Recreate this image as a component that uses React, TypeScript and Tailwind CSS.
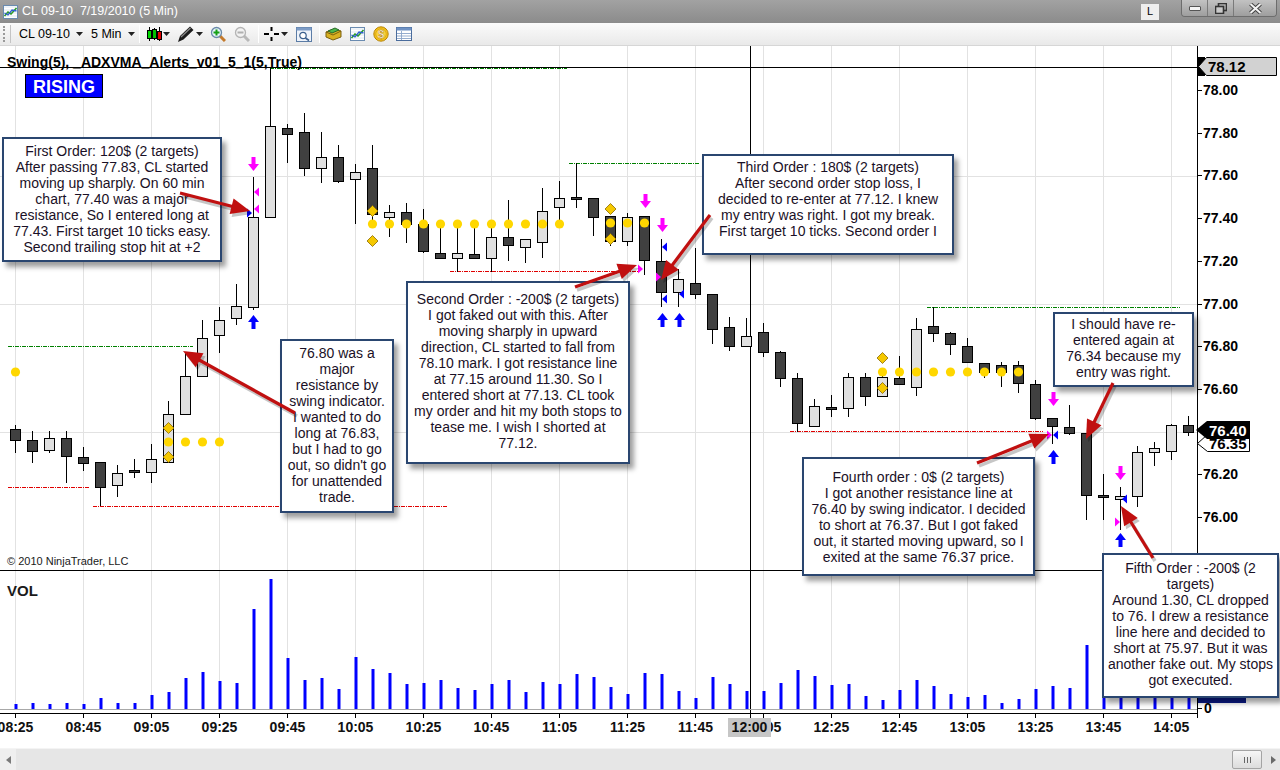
import React from "react";

// price pane: y = 90 + (78 - price) * 213.5, bars every 17px starting at x=15
const bx = (i: number) => 15 + i * 17;
const py = (p: number) => 90 + (78 - p) * 213.5;

// [bodyTop, bodyBottom, wickTop, wickBottom, down]  (page pixels)
const candles: [number, number, number, number, number][] = [
  [429, 440, 425, 453, 1], [440, 451, 431, 463, 1], [438, 450, 431, 453, 0], [438, 456, 431, 483, 1],
  [457, 463, 447, 471, 1], [462, 487, 462, 506, 1], [473, 485, 465, 497, 0], [470, 472, 459, 478, 1],
  [459, 472, 444, 483, 0], [414, 462, 401, 463, 0], [376, 414, 353, 414, 0], [338, 376, 320, 376, 0],
  [320, 335, 307, 353, 0], [306, 318, 284, 325, 0], [217, 307, 177, 310, 0], [126, 217, 68, 217, 0],
  [128, 134, 124, 163, 1], [132, 168, 113, 176, 1], [157, 168, 132, 183, 0], [157, 181, 145, 183, 1],
  [172, 179, 164, 224, 0], [168, 214, 145, 224, 1], [212, 217, 205, 237, 0], [212, 224, 203, 243, 1],
  [224, 251, 209, 253, 1], [253, 258, 225, 258, 1], [253, 258, 225, 272, 0], [254, 258, 225, 258, 1],
  [237, 258, 225, 272, 0], [237, 245, 200, 261, 1], [239, 247, 239, 263, 0], [211, 242, 188, 258, 0],
  [198, 207, 181, 225, 0], [197, 199, 163, 208, 1], [198, 217, 198, 236, 1], [216, 241, 216, 246, 1],
  [217, 241, 213, 246, 0], [216, 260, 216, 275, 1], [261, 292, 239, 307, 1], [279, 292, 269, 307, 0],
  [283, 294, 248, 299, 1], [294, 329, 294, 344, 1], [327, 346, 317, 351, 1], [336, 346, 318, 346, 0],
  [332, 352, 323, 357, 1], [352, 378, 351, 387, 1], [378, 423, 373, 432, 1], [406, 426, 399, 427, 0],
  [407, 409, 395, 417, 1], [377, 408, 373, 417, 0], [377, 396, 373, 406, 1], [377, 396, 373, 396, 0],
  [378, 384, 356, 384, 1], [329, 387, 318, 396, 0], [326, 333, 307, 342, 1], [333, 344, 332, 355, 1],
  [346, 362, 338, 362, 1], [363, 372, 363, 378, 1], [365, 372, 362, 387, 1], [365, 383, 361, 393, 1],
  [384, 418, 380, 420, 1], [418, 426, 418, 444, 1], [427, 433, 405, 435, 1], [433, 495, 433, 520, 1],
  [495, 497, 474, 520, 1], [496, 499, 487, 530, 0], [452, 496, 446, 507, 0], [448, 452, 442, 466, 0],
  [425, 451, 424, 460, 0], [425, 432, 416, 436, 1],
];

// top of each volume bar, baseline at 709
const volume = [
  704, 703, 704, 703, 704, 698, 703, 703, 695, 692, 678, 672, 681, 683, 609, 579, 658, 680, 678, 689,
  657, 669, 673, 684, 683, 680, 688, 690, 684, 680, 692, 682, 684, 674, 677, 687, 694, 673, 674, 691,
  698, 677, 684, 691, 691, 683, 670, 676, 685, 684, 696, 700, 690, 680, 686, 694, 697, 695, 703, 699,
  689, 686, 688, 645, 670, 675, 672, 668, 676, 680,
];

const times = ["08:25", "08:45", "09:05", "09:25", "09:45", "10:05", "10:25", "10:45", "11:05", "11:25", "11:45", "12:05", "12:25", "12:45", "13:05", "13:25", "13:45", "14:05"];
const prices = ["78.00", "77.80", "77.60", "77.40", "77.20", "77.00", "76.80", "76.60", "76.20", "76.00"];

const greenLines = [[270, 567, 68], [569, 700, 163], [927, 1180, 307], [8, 193, 346]];
const redLines = [[8, 90, 487], [93, 447, 506], [450, 640, 271], [790, 1043, 431]];

const dots: [number, number][] = [
  [15, 372],
  ...[9, 10, 11, 12].map((i) => [bx(i), 442] as [number, number]),
  ...Array.from({ length: 12 }, (_, k) => [bx(21 + k), 224] as [number, number]),
  ...[35, 36, 37].map((i) => [bx(i), 223] as [number, number]),
  ...Array.from({ length: 9 }, (_, k) => [bx(51 + k), 372] as [number, number]),
];
const diamonds = [[168, 428], [168, 457], [372, 211], [372, 241], [610, 209], [610, 239], [882, 358], [882, 388]];

// signal arrows: [x, top, "down" | "up"]
const bigArrows: [number, number, string][] = [
  [253, 157, "down"], [253, 315, "up"],
  [645, 194, "down"], [662, 218, "down"], [662, 313, "up"], [679, 313, "up"],
  [1053, 392, "down"], [1053, 450, "up"],
  [1120, 466, "down"], [1120, 533, "up"],
];
// small triangles: [baseX, centerY, dir (1 = points right, -1 = points left), colour]
const tris: [number, number, number, string][] = [
  [254, 192, -1, "#ff00ff"], [254, 209, -1, "#ff00ff"], [247, 213, 1, "#0000ff"],
  [638, 269, 1, "#ff00ff"], [662, 247, -1, "#0000ff"], [656, 277, 1, "#ff00ff"], [662, 299, -1, "#0000ff"], [679, 294, -1, "#0000ff"],
  [1047, 435, 1, "#ff00ff"], [1053, 435, -1, "#0000ff"],
  [1122, 499, -1, "#0000ff"], [1115, 522, 1, "#ff00ff"],
];

const redArrows = [
  [180, 193, 250, 211], [295, 413, 183, 351], [575, 287, 637, 265], [710, 215, 661, 280],
  [977, 463, 1049, 434], [1113, 383, 1086, 439], [1153, 558, 1121, 506],
];

const notes = [
  {
    cls: "left-[2px] top-[91px] w-[220px] h-[125px] pt-[4px]",
    lines: ["First Order: 120$ (2 targets)", "After passing 77.83, CL started", "moving up sharply. On 60 min", "chart, 77.40 was a major", "resistance, So I entered long at", "77.43. First target 10 ticks easy.", "Second trailing stop hit at +2"],
  },
  {
    cls: "left-[280px] top-[293px] w-[114px] h-[174px] pt-[4px]",
    lines: ["76.80 was a", "major", "resistance by", "swing indicator.", "I wanted to do", "long at 76.83,", "but I had to go", "out, so didn't go", "for unattended", "trade."],
  },
  {
    cls: "left-[406px] top-[235px] w-[224px] h-[183px] pt-[8px]",
    lines: ["Second Order : -200$ (2 targets)", "I got faked out with this. After", "moving sharply in upward", "direction, CL started to fall from", "78.10 mark. I got resistance line", "at 77.15 around 11.30. So I", "entered short at 77.13. CL took", "my order and hit my both stops to", "tease me. I wish I shorted at", "77.12."],
  },
  {
    cls: "left-[702px] top-[108px] w-[252px] h-[101px] pt-[3px]",
    lines: ["Third Order : 180$ (2 targets)", "After second order stop loss, I", "decided to re-enter at 77.12. I knew", "my entry was right. I got my break.", "First target 10 ticks. Second order I"],
  },
  {
    cls: "left-[802px] top-[411px] w-[233px] h-[119px] pt-[10px]",
    lines: ["Fourth order : 0$ (2 targets)", "I got another resistance line at", "76.40 by swing indicator. I decided", "to short at 76.37. But I got faked", "out, it started moving upward, so I", "exited at the same 76.37 price."],
  },
  {
    cls: "left-[1053px] top-[266px] w-[141px] h-[75px] pt-[2px]",
    lines: ["I should have re-", "entered again at", "76.34 because my", "entry was right."],
  },
  {
    cls: "left-[1102px] top-[507px] w-[177px] h-[145px] pt-[5px]",
    lines: ["Fifth Order : -200$ (2", "targets)", "Around 1.30, CL dropped", "to 76. I drew a resistance", "line here and decided to", "short at 75.97. But it was", "another fake out. My stops", "got executed."],
  },
];

const Caret = () => (
  <svg width="7" height="4" viewBox="0 0 7 4" className="shrink-0">
    <polygon points="0,0 7,0 3.5,4" fill="#222" />
  </svg>
);

const Sep = () => <div className="w-px h-[18px] bg-[#c4c4c4] border-r border-white mx-[4px]" />;

const ChartIcon = () => (
  <svg width="15" height="14" viewBox="0 0 15 14">
    <rect x="0.5" y="0.5" width="14" height="13" fill="#fff" stroke="#6a8bb0" />
    <path d="M1 2 H14 M1 5 H14 M1 8 H14 M1 11 H14" stroke="#dfe8f2" />
    <polyline points="1.5,11 5,7 8,9 13.5,3" fill="none" stroke="#2a9a2a" strokeWidth="1.6" />
    <polyline points="1.5,8 5,10 9,5 13.5,6" fill="none" stroke="#2f5fd0" strokeWidth="1.3" />
  </svg>
);

function TitleBar() {
  return (
    <div className="h-[23px] flex items-center bg-gradient-to-b from-[#a2a2a2] to-[#8b8b8b] relative shrink-0">
      <div className="ml-[3px] mr-[4px]">
        <ChartIcon />
      </div>
      <span className="text-[12.5px] text-white leading-none">CL 09-10&nbsp;&nbsp;7/19/2010 (5 Min)</span>
      <div className="ml-auto mr-[22px] w-[18px] h-[16px] bg-[#eeeeee] flex items-center justify-center text-[11px] text-black leading-none">
        L
      </div>
      <div className="self-start flex h-[17px] mr-[3px] border border-t-0 border-[#6d6d6d] rounded-b-[4px] overflow-hidden">
        <div className="w-[26px] flex items-center justify-center bg-gradient-to-b from-[#c2c2c2] to-[#9e9e9e] border-r border-[#7a7a7a]">
          <div className="w-[12px] h-[5px] bg-[#f4f4f4] border border-[#555] rounded-[1px]" />
        </div>
        <div className="w-[26px] flex items-center justify-center bg-gradient-to-b from-[#c2c2c2] to-[#9e9e9e] border-r border-[#7a7a7a]">
          <svg width="12" height="11" viewBox="0 0 12 11">
            <rect x="3.5" y="0.5" width="8" height="7" fill="none" stroke="#333" strokeWidth="1.6" />
            <rect x="0.5" y="3.5" width="8" height="7" fill="#c9c9c9" stroke="#333" strokeWidth="1.6" />
          </svg>
        </div>
        <div className="w-[42px] flex items-center justify-center bg-gradient-to-b from-[#c2c2c2] to-[#9e9e9e]">
          <svg width="13" height="11" viewBox="0 0 13 11">
            <path d="M1.5 1 L11.5 10 M11.5 1 L1.5 10" stroke="#444" strokeWidth="4" />
            <path d="M1.5 1 L11.5 10 M11.5 1 L1.5 10" stroke="#f2f2f2" strokeWidth="2" />
          </svg>
        </div>
      </div>
    </div>
  );
}

function Toolbar() {
  return (
    <div className="h-[23px] shrink-0 flex items-center bg-gradient-to-b from-[#fbfbfb] to-[#e9e9e9] border-b border-[#d6d6d6] text-[12.5px] text-black">
      <div className="ml-[3px] w-[2px] h-[16px] border-l-2 border-dotted border-[#9a9a9a]" />
      <div className="ml-[5px] w-px h-[18px] bg-[#c4c4c4]" />
      <span className="ml-[8px] leading-none">CL 09-10</span>
      <span className="ml-[6px]"><Caret /></span>
      <span className="ml-[8px] leading-none">5 Min</span>
      <span className="ml-[6px]"><Caret /></span>
      <Sep />
      <svg width="18" height="16" viewBox="0 0 18 16" className="ml-[1px]">
        <line x1="4.5" y1="1" x2="4.5" y2="15" stroke="#000" />
        <rect x="2.5" y="4.5" width="4" height="8" fill="#00d800" stroke="#000" />
        <line x1="9.5" y1="2" x2="9.5" y2="14" stroke="#000" />
        <rect x="7.5" y="3.5" width="4" height="9" fill="#00c000" stroke="#000" />
        <line x1="14.5" y1="1" x2="14.5" y2="15" stroke="#000" />
        <rect x="12.5" y="5.5" width="4" height="8" fill="#e00000" stroke="#000" />
      </svg>
      <Caret />
      <svg width="20" height="18" viewBox="0 0 20 18" className="ml-[6px]">
        <path d="M2 17 L4 11 L14 1.5 L17.5 5 L7.5 14.5 Z" fill="#1c1c1c" />
        <path d="M5 12 L14.5 3" stroke="#8a8a8a" strokeWidth="1.2" />
      </svg>
      <Caret />
      <svg width="16" height="16" viewBox="0 0 16 16" className="ml-[7px]">
        <line x1="10" y1="10" x2="15" y2="15" stroke="#c47a2c" strokeWidth="3" />
        <circle cx="6.5" cy="6.5" r="5" fill="#e6f2fb" stroke="#6a8aa8" strokeWidth="1.3" />
        <path d="M6.5 3.5 V9.5 M3.5 6.5 H9.5" stroke="#16a016" strokeWidth="2" />
      </svg>
      <svg width="16" height="16" viewBox="0 0 16 16" className="ml-[8px]">
        <line x1="10" y1="10" x2="15" y2="15" stroke="#b8b8b8" strokeWidth="3" />
        <circle cx="6.5" cy="6.5" r="5" fill="#f2f2f2" stroke="#b4b4b4" strokeWidth="1.3" />
        <path d="M3.5 6.5 H9.5" stroke="#b0b0b0" strokeWidth="2" />
      </svg>
      <span className="ml-[4px]"><Sep /></span>
      <svg width="18" height="16" viewBox="0 0 18 16">
        <path d="M1 8 H6 M11 8 H16 M8.5 1 V5 M8.5 11 V15" stroke="#000" strokeWidth="2" />
      </svg>
      <Caret />
      <svg width="16" height="15" viewBox="0 0 16 15" className="ml-[8px]">
        <rect x="0.5" y="0.5" width="15" height="14" fill="#eef3fa" stroke="#5b7ca6" />
        <rect x="0.5" y="0.5" width="15" height="3" fill="#7d9cc6" />
        <circle cx="7" cy="8.5" r="3.2" fill="#fff" stroke="#3a5f8e" strokeWidth="1.2" />
        <line x1="9.5" y1="11" x2="13" y2="13.5" stroke="#3a5f8e" strokeWidth="1.6" />
      </svg>
      <span className="ml-[3px]"><Sep /></span>
      <svg width="17" height="16" viewBox="0 0 17 16" className="ml-[1px]">
        <path d="M1 6 L9 3 L16 5 L16 11 L8 14 L1 11 Z" fill="#d8b020" stroke="#7a6010" />
        <path d="M1 6 L8 9 L16 5" fill="none" stroke="#7a6010" />
        <path d="M3 5 L10 2 L14 4 L7 7 Z" fill="#4cb84c" stroke="#2a6a2a" />
      </svg>
      <span className="ml-[8px]"><ChartIcon /></span>
      <svg width="16" height="16" viewBox="0 0 16 16" className="ml-[8px]">
        <circle cx="8" cy="8" r="7.2" fill="#f4c21a" stroke="#b88508" />
        <circle cx="8" cy="8" r="5.2" fill="#f9d440" stroke="#d9a514" strokeWidth="0.8" />
        <text x="8" y="12" textAnchor="middle" fontSize="11" fontWeight="bold" fill="#fff" stroke="#b07a06" strokeWidth="0.4">$</text>
      </svg>
      <svg width="16" height="14" viewBox="0 0 16 14" className="ml-[7px]">
        <rect x="0.5" y="0.5" width="15" height="13" fill="#fff" stroke="#4a6c9c" />
        <rect x="0.5" y="0.5" width="15" height="3" fill="#6f92c4" />
        <path d="M1 6.5 H15 M1 9 H15 M1 11.5 H15 M5.5 4 V13" stroke="#8aa4c8" strokeWidth="0.9" />
      </svg>
    </div>
  );
}

function Chart() {
  return (
    <svg width="1280" height="702" viewBox="0 46 1280 702" className="absolute inset-0">
      {/* grid */}
      {times.map((_, k) => (
        <line key={k} x1={15.5 + 68 * k} x2={15.5 + 68 * k} y1={46} y2={709} stroke="#e2e2e2" />
      ))}
      {[176, 304, 432].map((y) => (
        <line key={y} x1={0} x2={1197} y1={y + 0.5} y2={y + 0.5} stroke="#e2e2e2" />
      ))}

      {/* swing lines */}
      {greenLines.map(([a, b, y], k) => (
        <line key={"g" + k} x1={a} x2={b} y1={y + 0.5} y2={y + 0.5} stroke="#008000" strokeDasharray="4 1 1 1" />
      ))}
      {redLines.map(([a, b, y], k) => (
        <line key={"r" + k} x1={a} x2={b} y1={y + 0.5} y2={y + 0.5} stroke="#e00000" strokeDasharray="4 1 1 1" />
      ))}

      {/* crosshair */}
      <line x1={0} x2={1197} y1={67.5} y2={67.5} stroke="#000" />
      <line x1={750.5} x2={750.5} y1={46} y2={718} stroke="#000" />

      {/* candles */}
      {candles.map(([bt, bb, wt, wb, down], i) => {
        const x = bx(i) + 0.5;
        return (
          <g key={i}>
            <line x1={x} x2={x} y1={wt} y2={wb} stroke="#000" />
            <rect x={x - 5} y={bt + 0.5} width={10} height={Math.max(bb - bt, 1)} fill={down ? "#404040" : "#e0e0e0"} stroke="#000" />
          </g>
        );
      })}

      {/* ADXVMA dots */}
      {dots.map(([x, y], k) => (
        <circle key={k} cx={x + 0.5} cy={y} r={4.6} fill="#ffd700" />
      ))}
      {diamonds.map(([x, y], k) => (
        <polygon key={k} points={`${x + 0.5},${y - 5.5} ${x + 6},${y} ${x + 0.5},${y + 5.5} ${x - 5},${y}`} fill="#f5c800" stroke="#8a6a00" strokeWidth="0.8" />
      ))}

      {/* entry / exit markers */}
      {bigArrows.map(([x, t, dir], k) => {
        const c = dir === "down" ? "#ff00ff" : "#0000ff";
        const xc = x + 0.5;
        return dir === "down" ? (
          <g key={k} fill={c}>
            <rect x={xc - 2} y={t} width={4} height={8} />
            <polygon points={`${xc - 5.5},${t + 7} ${xc + 5.5},${t + 7} ${xc},${t + 14}`} />
          </g>
        ) : (
          <g key={k} fill={c}>
            <rect x={xc - 2} y={t + 6} width={4} height={8} />
            <polygon points={`${xc - 5.5},${t + 7} ${xc + 5.5},${t + 7} ${xc},${t}`} />
          </g>
        );
      })}
      {tris.map(([x, y, d, c], k) => {
        const base = d === 1 ? x : x + 5;
        return <polygon key={k} points={`${base + 5 * d},${y} ${base},${y - 4.5} ${base},${y + 4.5}`} fill={c} />;
      })}

      {/* price axis */}
      <line x1={1197.5} x2={1197.5} y1={46} y2={718} stroke="#000" />
      {prices.map((p) => {
        const y = Math.round(py(parseFloat(p)));
        return (
          <g key={p}>
            <line x1={1197} x2={1202} y1={y + 0.5} y2={y + 0.5} stroke="#000" />
            <text x={1203} y={y + 5} fontSize="14" fontWeight="bold" fill="#000">{p}</text>
          </g>
        );
      })}
      <rect x={1197} y={57} width={8} height={19} fill="#000" />
      <polygon points="1198.5,66.5 1206.5,57.5 1276.5,57.5 1276.5,75.5 1206.5,75.5" fill="#d2d2d2" stroke="#000" />
      <text x={1208} y={72} fontSize="15" fontWeight="bold" fill="#000">78.12</text>

      <polygon points="1197.5,443.5 1207.5,434.5 1249.5,434.5 1249.5,451.5 1207.5,451.5" fill="#fff" stroke="#000" />
      <text x={1209} y={449} fontSize="15" fontWeight="bold" fill="#000">76.35</text>
      <polygon points="1196,430 1207,421 1250,421 1250,439 1207,439" fill="#000" />
      <text x={1209} y={436} fontSize="15" fontWeight="bold" fill="#fff">76.40</text>

      {/* labels */}
      <text x={7} y={67} fontSize="14" fontWeight="bold" fill="#000">Swing(5), _ADXVMA_Alerts_v01_5_1(5,True)</text>
      <rect x={25.5} y={74.5} width={77} height={23} fill="#0000ff" stroke="#000" />
      <text x={64} y={92.5} fontSize="18" fontWeight="bold" fill="#fff" textAnchor="middle">RISING</text>
      <text x={7} y={565} fontSize="11" fill="#1a1a1a">© 2010 NinjaTrader, LLC</text>

      {/* panel separator + volume */}
      <line x1={0} x2={1197} y1={570.5} y2={570.5} stroke="#000" />
      <text x={7} y={596} fontSize="15" fontWeight="bold" fill="#1a1a1a">VOL</text>
      {volume.map((top, i) => (
        <rect key={i} x={bx(i) - 0.5} y={top} width={3} height={709 - top} fill="#0000ff" />
      ))}
      <line x1={0} x2={1197} y1={709.5} y2={709.5} stroke="#a8a8a8" />
      <rect x={1198} y={696} width={48} height={7} fill="#0a1a8a" />
      <line x1={1197} x2={1202} y1={708.5} y2={708.5} stroke="#000" />
      <text x={1204} y={713} fontSize="14" fontWeight="bold" fill="#000">0</text>

      {/* time axis */}
      <line x1={0} x2={1197} y1={713.5} y2={713.5} stroke="#000" />
      {times.map((t, k) => {
        const x = 15.5 + 68 * k;
        return (
          <g key={t}>
            <line x1={x} x2={x} y1={713} y2={718} stroke="#000" />
            <text x={x} y={732} fontSize="14" fontWeight="bold" fill="#111" textAnchor="middle">{t}</text>
          </g>
        );
      })}
      <rect x={728} y={718} width={43} height={19} fill="#c6c6c6" />
      <text x={749.5} y={732} fontSize="14" fontWeight="bold" fill="#111" textAnchor="middle">12:00</text>
    </svg>
  );
}

function RedArrows() {
  return (
    <svg width="1280" height="702" viewBox="0 46 1280 702" className="absolute inset-0 pointer-events-none">
      {redArrows.map(([x1, y1, x2, y2], k) => {
        const len = Math.hypot(x2 - x1, y2 - y1);
        const ux = (x2 - x1) / len;
        const uy = (y2 - y1) / len;
        const bx2 = x2 - ux * 19;
        const by2 = y2 - uy * 19;
        const head = `${x2},${y2} ${bx2 - uy * 8},${by2 + ux * 8} ${bx2 + uy * 8},${by2 - ux * 8}`;
        return (
          <g key={k}>
            <g transform="translate(2 3)" opacity="0.22">
              <line x1={x1} y1={y1} x2={bx2} y2={by2} stroke="#000" strokeWidth="3.5" />
              <polygon points={head} fill="#000" />
            </g>
            <line x1={x1} y1={y1} x2={bx2 + ux * 2} y2={by2 + uy * 2} stroke="#c01010" strokeWidth="3.2" />
            <polygon points={head} fill="#c01010" />
          </g>
        );
      })}
    </svg>
  );
}

function Note({ cls, lines }: { cls: string; lines: string[] }) {
  return (
    <div className={`absolute ${cls} bg-white border-2 border-[#2a4670] shadow-[4px_5px_5px_rgba(0,0,0,0.38)] text-[14px] leading-4 text-[#1a1026] text-center`}>
      {lines.map((l, k) => (
        <div key={k} className="whitespace-nowrap">{l}</div>
      ))}
    </div>
  );
}

function Scrollbar() {
  return (
    <div className="h-[22px] shrink-0 flex items-center bg-[#e6e6e6] border-t border-[#f4f4f4]">
      <div className="w-[16px] h-full flex items-center justify-center bg-[#efefef]">
        <svg width="5" height="8" viewBox="0 0 5 8">
          <polygon points="5,0 5,8 0,4" fill="#7a7a7a" />
        </svg>
      </div>
      <div className="flex-1" />
      <div className="w-[30px] h-[19px] mr-[4px] bg-gradient-to-b from-[#f6f6f6] to-[#dcdcdc] border border-[#a4a4a4] rounded-[2px] flex items-center justify-center gap-[2px]">
        <div className="w-px h-[6px] bg-[#666]" />
        <div className="w-px h-[6px] bg-[#666]" />
        <div className="w-px h-[6px] bg-[#666]" />
      </div>
      <div className="w-[14px] h-full flex items-center justify-center">
        <svg width="5" height="8" viewBox="0 0 5 8">
          <polygon points="0,0 0,8 5,4" fill="#6a6a6a" />
        </svg>
      </div>
    </div>
  );
}

export default function App() {
  return (
    <div className="w-[1280px] h-[770px] flex flex-col overflow-hidden bg-white font-['Liberation_Sans',Arial,sans-serif]">
      <TitleBar />
      <Toolbar />
      <div className="relative flex-1 bg-white">
        <Chart />
        {notes.map((n, k) => (
          <Note key={k} cls={n.cls} lines={n.lines} />
        ))}
        <RedArrows />
      </div>
      <Scrollbar />
    </div>
  );
}
